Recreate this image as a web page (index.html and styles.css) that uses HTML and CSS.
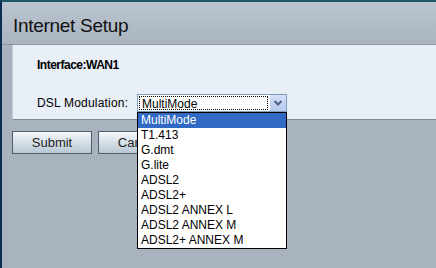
FILE: index.html
```html
<!DOCTYPE html>
<html lang="en">
<head>
    <meta charset="UTF-8">
    <title>Internet Setup</title>
    <link rel="stylesheet" href="styles.css">
</head>
<body>
    <div class="page">
        <div class="header">
            <h1>Internet Setup</h1>
        </div>
        <div class="panel">
            <div class="iface">Interface:WAN1</div>
            <div class="row">
                <span class="label">DSL Modulation:</span>
                <div class="select">
                    <div class="select-box">
                        <span class="value">MultiMode</span>
                        <span class="arrow">
                            <svg width="16" height="16" viewBox="0 0 16 16">
                                <path d="M4.5 6 L8 9.5 L11.5 6" fill="none" stroke="#4d6185" stroke-width="2"/>
                            </svg>
                        </span>
                    </div>
                    <ul class="options">
                        <li class="selected">MultiMode</li>
                        <li>T1.413</li>
                        <li>G.dmt</li>
                        <li>G.lite</li>
                        <li>ADSL2</li>
                        <li>ADSL2+</li>
                        <li>ADSL2 ANNEX L</li>
                        <li>ADSL2 ANNEX M</li>
                        <li>ADSL2+ ANNEX M</li>
                    </ul>
                </div>
            </div>
        </div>
        <div class="buttons">
            <button class="btn">Submit</button>
            <button class="btn">Cancel</button>
        </div>
    </div>
</body>
</html>
```
FILE: styles.css
```css
body {
    margin: 0;
    padding: 0;
    font-family: "Liberation Sans", Arial, sans-serif;
    font-size: 12px;
    color: #000;
}

.page {
    width: 436px;
    height: 268px;
    box-sizing: border-box;
    border-top: 2px solid #1d5666;
    border-left: 2px solid #0d2c55;
    background-color: #a9b3c0;
    overflow: hidden;
}

.header {
    height: 43px;
    box-sizing: border-box;
    padding: 13px 0 0 11px;
    background: linear-gradient(#bac5d0, #a9b4c0);
    border-bottom: 1px solid #8a97a4;
}

h1 {
    margin: 0;
    font-size: 19px;
    font-weight: normal;
    letter-spacing: -0.3px;
    color: #111;
}

.panel {
    margin-left: 10px;
    height: 75px;
    box-sizing: border-box;
    background-color: #e8eff7;
    border-left: 1px solid #c4ccd6;
    border-bottom: 1px solid #7d8a96;
    padding: 13px 0 0 24px;
}

.iface {
    font-weight: bold;
    letter-spacing: -0.5px;
    height: 16px;
}

.row {
    display: flex;
    align-items: center;
    margin-top: 20px;
}

.label {
    width: 100px;
    letter-spacing: 0.2px;
}

.select {
    position: relative;
    width: 150px;
}

.select-box {
    display: flex;
    height: 18px;
    box-sizing: border-box;
    border: 1px solid #7f9db9;
    background-color: #fff;
}

.value {
    flex: 1;
    margin: 1px;
    padding-left: 2px;
    line-height: 14px;
    border: 1px dotted #000;
}

.arrow {
    width: 16px;
    background: linear-gradient(#d4def7, #b8c9ee);
    border-left: 1px solid #fff;
}

.arrow svg {
    display: block;
}

.options {
    position: absolute;
    top: 18px;
    left: 0;
    width: 150px;
    box-sizing: border-box;
    margin: 0;
    padding: 0;
    list-style: none;
    background-color: #fff;
    border: 1px solid #000;
}

.options li {
    height: 15px;
    line-height: 15px;
    padding-left: 3px;
}

.options .selected {
    background-color: #316ac5;
    color: #fff;
}

.buttons {
    display: flex;
    gap: 6px;
    padding: 11px 0 0 10px;
}

.btn {
    width: 80px;
    height: 23px;
    font-family: "Liberation Sans", Arial, sans-serif;
    font-size: 13px;
    color: #222;
    border: 1px solid #4e5d6c;
    background: linear-gradient(#f4f8fb, #d0dbe4 60%, #b8c6d2);
    padding: 0;
}
```
